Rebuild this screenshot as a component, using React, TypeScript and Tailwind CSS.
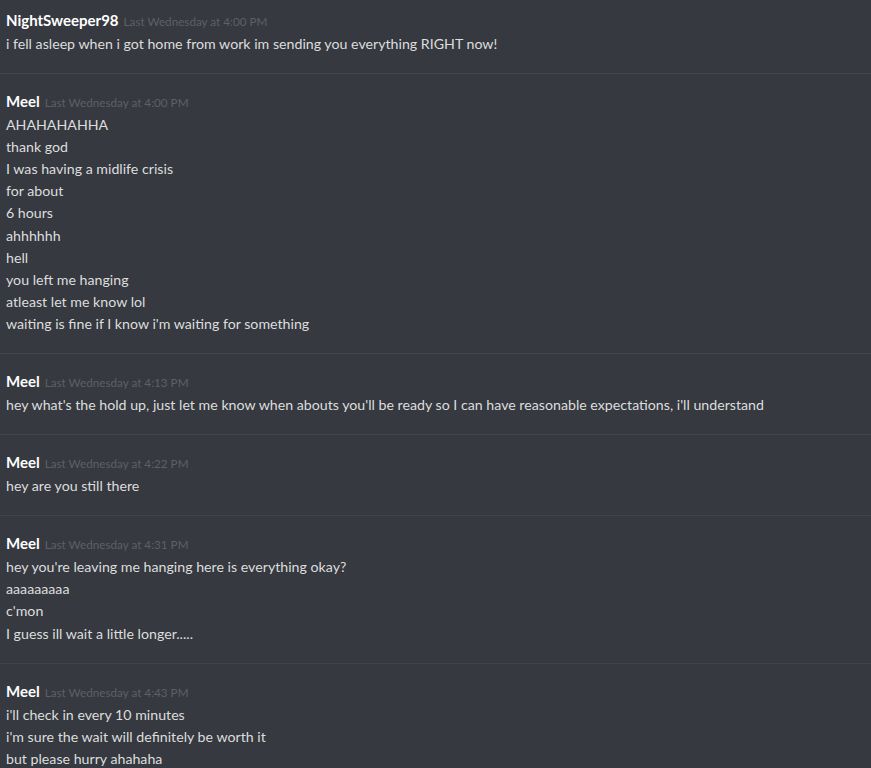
import React from "react";

type Msg = { user: string; time: string; lines: string[] };

const messages: Msg[] = [
  {
    user: "NightSweeper98",
    time: "Last Wednesday at 4:00 PM",
    lines: ["i fell asleep when i got home from work im sending you everything RIGHT now!"],
  },
  {
    user: "Meel",
    time: "Last Wednesday at 4:00 PM",
    lines: [
      "AHAHAHAHHA",
      "thank god",
      "I was having a midlife crisis",
      "for about",
      "6 hours",
      "ahhhhhh",
      "hell",
      "you left me hanging",
      "atleast let me know lol",
      "waiting is fine if I know i'm waiting for something",
    ],
  },
  {
    user: "Meel",
    time: "Last Wednesday at 4:13 PM",
    lines: [
      "hey what's the hold up, just let me know when abouts you'll be ready so I can have reasonable expectations, i'll understand",
    ],
  },
  {
    user: "Meel",
    time: "Last Wednesday at 4:22 PM",
    lines: ["hey are you still there"],
  },
  {
    user: "Meel",
    time: "Last Wednesday at 4:31 PM",
    lines: [
      "hey you're leaving me hanging here is everything okay?",
      "aaaaaaaaa",
      "c'mon",
      "I guess ill wait a little longer.....",
    ],
  },
  {
    user: "Meel",
    time: "Last Wednesday at 4:43 PM",
    lines: [
      "i'll check in every 10 minutes",
      "i'm sure the wait will definitely be worth it",
      "but please hurry ahahaha",
    ],
  },
];

export default function App() {
  return (
    <div
      className="w-[871px] h-[768px] overflow-hidden bg-[#36393f]"
      style={{ fontFamily: 'Lato, "Open Sans", sans-serif' }}
    >
      {messages.map((m, i) => (
        <div key={i}>
          {i > 0 && <div className="h-px bg-[#41444a]" />}
          <div className={`px-[6px] ${i === 0 ? "pt-[9px]" : "pt-[16px]"} pb-[18px]`}>
            <div className="flex items-baseline h-[24px] leading-[23px]">
              <span className="text-white font-bold text-[15px]">{m.user}</span>
              <span className="ml-[5px] text-[11.7px] text-[#5d6066]">{m.time}</span>
            </div>
            {m.lines.map((l, j) => (
              <div key={j} className="text-[#dcddde] text-[14.2px] leading-[22.1px] whitespace-nowrap">
                {l}
              </div>
            ))}
          </div>
        </div>
      ))}
    </div>
  );
}
